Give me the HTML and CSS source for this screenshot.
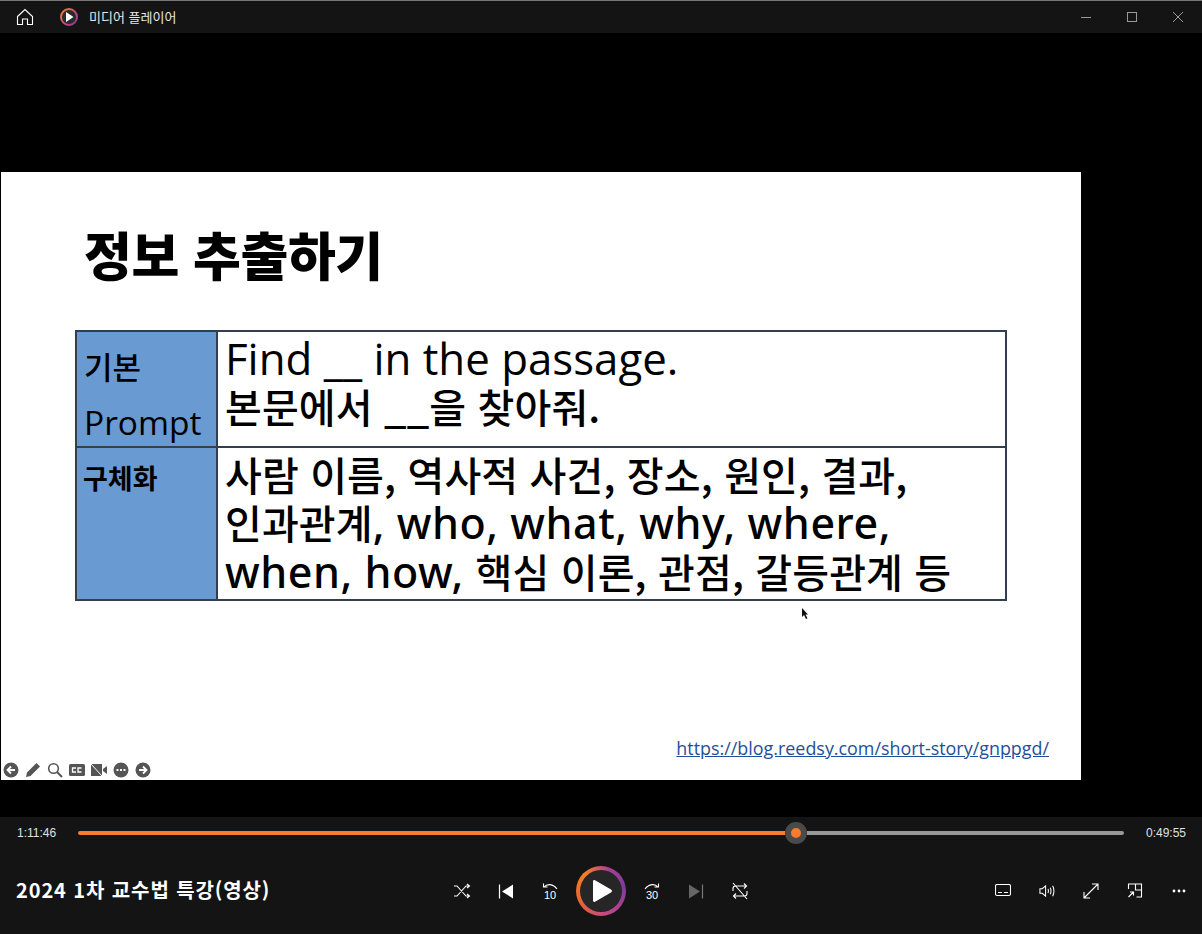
FILE: index.html
```html
<!DOCTYPE html>
<html lang="ko">
<head>
  <meta charset="UTF-8" />
  <title>미디어 플레이어</title>
  <link rel="stylesheet" href="styles.css">
</head>
<body>
  <div class="window">
    <header class="titlebar">
      <svg class="home" width="18" height="18" viewBox="0 0 18 18" fill="none" stroke="#fff" stroke-width="1.1"><path d="M1.5 8.5 9 1.5l7.500 7v8h-5v-5.500h-5v5.500h-5z"/></svg>
      <svg class="app-logo" width="20" height="20" viewBox="0 0 20 20">
        <defs><linearGradient id="lg" x1="0" y1="0" x2="1" y2="1"><stop offset="0" stop-color="#f58024"/><stop offset=".6" stop-color="#c2448c"/><stop offset="1" stop-color="#7d3c98"/></linearGradient></defs>
        <circle cx="10" cy="10" r="8" fill="#2a2a2a" stroke="url(#lg)" stroke-width="2"/>
        <path d="M7 5 14.500 10 7 15z" fill="#fff"/>
      </svg>
      <span class="app-name">미디어 플레이어</span>
      <div class="win-btns">
        <svg width="12" height="12" viewBox="0 0 12 12" stroke="#999" fill="none"><path d="M1 6.500h10"/></svg>
        <svg width="12" height="12" viewBox="0 0 12 12" stroke="#999" fill="none"><rect x="1.500" y="1.500" width="9" height="9"/></svg>
        <svg width="12" height="12" viewBox="0 0 12 12" stroke="#999" fill="none"><path d="M1 1l10 10M11 1 1 11"/></svg>
      </div>
    </header>

    <main class="video">
      <section class="slide">
        <h1>정보 추출하기</h1>
        <table>
          <tr class="row-a">
            <th><span class="k1">기본</span><span class="k2">Prompt</span></th>
            <td><span class="en plain">Find __ in the passage.</span><br>본문에서 __을 찾아줘.</td>
          </tr>
          <tr class="row-b">
            <th><span class="k3">구체화</span></th>
            <td>사람 이름, 역사적 사건, 장소, 원인, 결과,<br>인과관계<span class="en">, who, what, why, where,</span><br><span class="en">when, how, </span>핵심 이론, 관점, 갈등관계 등</td>
          </tr>
        </table>
        <a class="src" href="#">https://blog.reedsy.com/short-story/gnppgd/</a>
        <svg class="cursor" width="8" height="12" viewBox="0 0 8 12"><path d="M1 0v9l2-2 2 4 1.500-.7-2-3.800H7z" fill="#111"/></svg>
        <div class="slide-tools">
          <svg width="16" height="16" viewBox="0 0 16 16"><circle cx="8" cy="8" r="7.500" fill="#555"/><path d="M12 8H5M8 4.500 4.500 8 8 11.500" stroke="#fff" stroke-width="1.800" fill="none"/></svg>
          <svg width="16" height="16" viewBox="0 0 16 16"><path d="M1 15l1-4.500L11.500 1l3.500 3.500L5.500 14z" fill="#555"/></svg>
          <svg width="16" height="16" viewBox="0 0 16 16" fill="none" stroke="#555" stroke-width="1.600"><circle cx="6.500" cy="6.500" r="4.800"/><path d="M10 10l5 5" stroke-width="2"/></svg>
          <svg width="16" height="12" viewBox="0 0 16 12"><rect width="16" height="12" rx="1.500" fill="#555"/><path d="M7 4H3.500v4H7M12.500 4H9v4h3.500" stroke="#fff" stroke-width="1.300" fill="none"/></svg>
          <svg width="16" height="12" viewBox="0 0 16 12"><path d="M0 0h11v12H0zM12 5l4-3v8l-4-3z" fill="#555"/><path d="M0 0l11 12" stroke="#fff"/></svg>
          <svg width="16" height="16" viewBox="0 0 16 16"><circle cx="8" cy="8" r="7.500" fill="#555"/><path d="M3.500 8h2M7 8h2M10.500 8h2" stroke="#fff" stroke-width="1.800"/></svg>
          <svg width="16" height="16" viewBox="0 0 16 16"><circle cx="8" cy="8" r="7.500" fill="#555"/><path d="M4 8h7M8 4.500 11.500 8 8 11.500" stroke="#fff" stroke-width="1.800" fill="none"/></svg>
        </div>
      </section>
    </main>

    <footer class="controls">
      <div class="seek">
        <span class="time">1:11:46</span>
        <div class="track">
          <div class="done"></div>
          <div class="knob"></div>
          <div class="rest"></div>
        </div>
        <span class="time end">0:49:55</span>
      </div>
      <div class="bar">
        <div class="media-title">2024 1차 교수법 특강(영상)</div>
        <div class="transport">
          <svg width="18" height="16" viewBox="0 0 18 16" fill="none" stroke="#fff" stroke-width="1.100"><path d="M1 3h3l9 10h3M1 13h3l9-10h3M14 1l2.500 2L14 5M14 11l2.500 2-2.500 2"/></svg>
          <svg width="18" height="15" viewBox="-1 .5 18 15"><path d="M1.500 1v14" stroke="#fff" stroke-width="1.200"/><path d="M15 1v14L4 8z" fill="#fff"/></svg>
          <div class="skip">
            <svg width="16" height="8" viewBox="0 0 16 8" fill="none" stroke="#fff" stroke-width="1.100"><path d="M1.500 .5V4h4M2 4C5 .5 11 .5 15 6"/></svg>
            <span>10</span>
          </div>
          <div class="play">
            <svg width="26" height="26" viewBox="0 0 26 26"><path d="M5 3.500c0-1.200 1-1.800 2-1.200L23 11.500c1.300.8 1.300 2.200 0 3L7 23.700c-1 .6-2 0-2-1.200z" fill="#fff"/></svg>
          </div>
          <div class="skip">
            <svg width="16" height="8" viewBox="0 0 16 8" fill="none" stroke="#fff" stroke-width="1.100"><path d="M14.500 .5V4h-4M14 4C11 .5 5 .5 1 6"/></svg>
            <span>30</span>
          </div>
          <svg width="18" height="15" viewBox="-1 .5 18 15"><path d="M14.500 1v14" stroke="#777" stroke-width="1.200"/><path d="M1 1v14L12 8z" fill="#666"/></svg>
          <svg width="18" height="18" viewBox="0 0 18 18" fill="none" stroke="#fff" stroke-width="1.100"><path d="M2 9V6.500C2 5 3 4 4.500 4H15M13 1.500 15.500 4 13 6.500M16 9v2.500C16 13 15 14 13.500 14H3M5 11.500 2.500 14 5 16.500M2 1l14 16"/></svg>
        </div>
        <div class="extras">
          <svg width="16" height="13" viewBox="0 0 16 13" fill="none" stroke="#fff" stroke-width="1.100"><rect x=".5" y=".5" width="15" height="11" rx="1.500"/><path d="M3 8.500h4M9 8.500h4"/></svg>
          <svg width="16" height="14" viewBox="0 0 17 14" fill="none" stroke="#fff" stroke-width="1.100"><path d="M1 4.500h2.500L7 1.500v11l-3.500-3H1zM9.500 5c.7 1.300.7 2.700 0 4M12 3.500c1 2.300 1 4.700 0 7M14.500 1.500c1.800 3.500 1.800 7.500 0 11"/></svg>
          <svg width="16" height="16" viewBox="0 0 16 16" fill="none" stroke="#fff" stroke-width="1.100"><path d="M1 15 15 1M9 1h6v6M1 9v6h6"/></svg>
          <svg width="16" height="15" viewBox="-.5 0 16 15" fill="none" stroke="#fff" stroke-width="1.100"><path d="M1 6V1h7v6h6M8 1h6v13H9M1 14l5-5M2.500 9H6v3.500"/></svg>
          <svg width="16" height="4" viewBox="-1 0 16 4" fill="#fff"><circle cx="2" cy="2" r="1.400"/><circle cx="7" cy="2" r="1.400"/><circle cx="12" cy="2" r="1.400"/></svg>
        </div>
      </div>
    </footer>
  </div>
</body>
</html>
```

FILE: styles.css
```css
* {
  box-sizing: border-box;
}
html, body {
  margin: 0;
  height: 100%;
  overflow: hidden;
}
body {
  font-family: "Noto Sans CJK KR", "Noto Sans", sans-serif;
  background: #000;
}
.window {
  width: 1202px;
  height: 934px;
  display: flex;
  flex-direction: column;
}

/* title bar */
.titlebar {
  height: 33px;
  flex: none;
  background: #141414;
  border-top: 1px solid #777;
  display: flex;
  align-items: center;
  padding-left: 16px;
  color: #e8e8e8;
}
.home {
  margin-right: 25px;
}
.app-name {
  margin: 0 0 1px 10px;
  font-size: 13px;
}
.win-btns {
  margin-left: auto;
  display: flex;
  gap: 34px;
  padding-right: 18px;
}

/* video */
.video {
  flex: 1;
  padding: 139px 0 0 1px;
}
.slide {
  position: relative;
  width: 1080px;
  height: 608px;
  background: #fff;
  padding: 38px 0 0 74px;
  color: #000;
}
h1 {
  margin: 0 0 33px 9px;
  font-size: 52px;
  line-height: 87px;
  font-weight: 900;
  letter-spacing: -.4px;
}
table {
  width: 932px;
  height: 271px;
  border-collapse: collapse;
  table-layout: fixed;
}
th, td {
  border: 2px solid #333f4d;
  padding: 0;
  text-align: left;
  vertical-align: top;
}
th {
  width: 141px;
  background: #6a9ad2;
  font-weight: 500;
  padding-left: 7px;
}
.row-a {
  height: 116px;
}
.k1, .k2, .k3 {
  display: block;
}
.k1 {
  font-size: 31px;
  line-height: 40px;
  margin-top: 14px;
}
.k2 {
  font-family: "Open Sans", "Noto Sans", sans-serif;
  font-weight: 400;
  font-size: 33.500px;
  line-height: 46px;
  margin-top: 13px;
}
.k3 {
  font-size: 27px;
  line-height: 36px;
  margin-top: 12px;
  margin-left: -1px;
  font-weight: 700;
}
td {
  font-size: 40px;
  line-height: 48px;
  font-weight: 500;
  letter-spacing: .13px;
  padding: 2px 0 0 7px;
  white-space: nowrap;
}
.en {
  font-family: "Noto Sans", "Open Sans", sans-serif;
  font-size: 43px;
  font-weight: 500;
  letter-spacing: .55px;
}
.en.plain {
  font-family: "Open Sans", sans-serif;
  font-size: 43.800px;
  font-weight: 400;
  letter-spacing: 0;
}
.src {
  position: absolute;
  right: 32px;
  bottom: 20px;
  font-family: "Open Sans", sans-serif;
  font-size: 17.900px;
  color: #1f4e9a;
}
.cursor {
  position: absolute;
  left: 800px;
  top: 436px;
}
.slide-tools {
  position: absolute;
  left: 2px;
  bottom: 2px;
  display: flex;
  align-items: center;
  gap: 6px;
}

/* bottom controls */
.controls {
  height: 117px;
  flex: none;
  background: #141414;
  color: #fff;
}
.seek {
  height: 32px;
  display: flex;
  align-items: center;
  padding: 0 17px;
}
.time {
  width: 61px;
  font-family: "Liberation Sans", sans-serif;
  font-size: 12px;
  color: #e0e0e0;
}
.time.end {
  width: 39px;
  margin-left: 22px;
}
.track {
  width: 1046px;
  display: flex;
  align-items: center;
}
.done {
  width: 707px;
  height: 4px;
  background: #f97b2b;
  border-radius: 2px 0 0 2px;
}
.knob {
  width: 22px;
  height: 22px;
  flex: none;
  border-radius: 50%;
  background: #f97b2b;
  border: 6px solid #4a4a4a;
}
.rest {
  flex: 1;
  height: 4px;
  background: #989898;
  border-radius: 0 2px 2px 0;
}
.bar {
  position: relative;
  height: 85px;
  display: flex;
  align-items: center;
  padding: 0 15px 2px 16px;
}
.media-title {
  font-size: 20px;
  font-weight: 700;
  letter-spacing: .9px;
  margin-bottom: 2px;
}
.transport {
  position: absolute;
  left: 453px;
  top: 17px;
  display: flex;
  align-items: center;
  gap: 26px;
  height: 50px;
}
.transport > svg {
  flex: none;
}
.skip {
  width: 18px;
  display: flex;
  flex-direction: column;
  align-items: center;
  font-family: "Liberation Sans", sans-serif;
  font-size: 11px;
  line-height: 9px;
}
.play {
  width: 50px;
  height: 50px;
  flex: none;
  margin: 0 -9px;
  border-radius: 50%;
  background: conic-gradient(from 20deg, #a83f97 0deg, #7d3c98 60deg, #c2448c 140deg, #e8672f 230deg, #f58024 300deg, #a83f97 360deg);
  position: relative;
  display: flex;
  align-items: center;
  justify-content: center;
}
.play::before {
  content: "";
  position: absolute;
  inset: 4px;
  border-radius: 50%;
  background: #262626;
}
.play svg {
  position: relative;
}
.extras {
  margin-left: auto;
  display: flex;
  align-items: center;
  gap: 28px;
}
```
